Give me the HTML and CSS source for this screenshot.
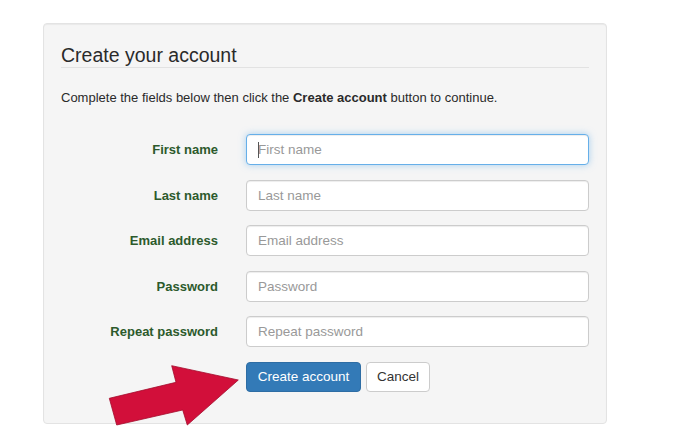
FILE: index.html
```html
<!DOCTYPE html>
<html lang="en">
<head>
<meta charset="utf-8">
<title>Create your account</title>
<link rel="stylesheet" href="styles.css">
</head>
<body>
<div class="panel">
  <h1 class="title">Create your account</h1>
  <p class="intro">Complete the fields below then click the <strong>Create account</strong> button to continue.</p>
  <form class="form">
    <label class="label" for="fn">First name</label>
    <span class="field focused"><input class="input" id="fn" type="text" placeholder="First name"></span>
    <label class="label" for="ln">Last name</label>
    <span class="field"><input class="input" id="ln" type="text" placeholder="Last name"></span>
    <label class="label" for="em">Email address</label>
    <span class="field"><input class="input" id="em" type="text" placeholder="Email address"></span>
    <label class="label" for="pw">Password</label>
    <span class="field"><input class="input" id="pw" type="password" placeholder="Password"></span>
    <label class="label" for="pw2">Repeat password</label>
    <span class="field"><input class="input" id="pw2" type="password" placeholder="Repeat password"></span>
    <div class="actions">
      <button type="button" class="btn btn-primary">Create account</button>
      <button type="button" class="btn btn-default">Cancel</button>
    </div>
  </form>
</div>
<svg class="arrow" width="673" height="435" viewBox="0 0 673 435">
  <polygon points="109.3,398.3 176,382.3 171.7,365.7 238.3,380 187.3,425 182.7,410 116.7,425" fill="#d20f3a" stroke="#a30b2c" stroke-width="0.8" stroke-linejoin="miter"/>
</svg>
</body>
</html>
```

FILE: styles.css
```css
html, body {
  margin: 0;
  padding: 0;
  background: #ffffff;
}
body {
  font-family: "Liberation Sans", Arial, Helvetica, sans-serif;
  color: #333333;
  width: 673px;
  height: 435px;
  overflow: hidden;
  position: relative;
}
.panel {
  margin: 23px 0 0 43px;
  width: 564px;
  height: 401px;
  box-sizing: border-box;
  background: #f5f5f5;
  border: 1px solid #e3e3e3;
  border-radius: 4px;
  box-shadow: inset 0 1px 1px rgba(0,0,0,0.05);
  padding: 0 17px;
}
.title {
  margin: 20px 0 0;
  font-size: 19.5px;
  line-height: 22px;
  font-weight: normal;
  color: #2a2a2a;
  padding-bottom: 1px;
  border-bottom: 1px solid #e2e2e2;
}
.intro {
  margin: 20px 0 0;
  font-size: 13px;
  line-height: 19px;
  color: #2a2a2a;
}
.intro strong {
  font-weight: bold;
}
.form {
  margin-top: 27px;
  display: grid;
  grid-template-columns: 157px 343px;
  column-gap: 28px;
  row-gap: 14.5px;
  grid-auto-rows: 31px;
}
.label {
  display: flex;
  align-items: center;
  justify-content: flex-end;
  font-weight: bold;
  font-size: 13px;
  color: #2c5a2c;
}
.field {
  position: relative;
  display: block;
}
.input {
  display: block;
  width: 100%;
  height: 31px;
  box-sizing: border-box;
  border: 1px solid #cccccc;
  border-radius: 4px;
  background: #ffffff;
  padding: 0 11px;
  font-family: inherit;
  font-size: 13.5px;
  color: #555;
  box-shadow: inset 0 1px 1px rgba(0,0,0,0.075);
  outline: none;
}
.input::placeholder {
  color: #999999;
}
.focused .input {
  border-color: #66afe9;
  box-shadow: inset 0 1px 1px rgba(0,0,0,0.075), 0 0 7px rgba(102,175,233,0.55);
}
.focused::after {
  content: "";
  position: absolute;
  left: 12px;
  top: 8px;
  width: 1px;
  height: 16px;
  background: #555;
}
.actions {
  grid-column: 2;
  display: flex;
  gap: 5px;
  align-items: flex-start;
}
.btn {
  height: 30px;
  box-sizing: border-box;
  border-radius: 4px;
  font-family: inherit;
  font-size: 13.5px;
  padding: 0;
  white-space: nowrap;
  cursor: pointer;
}
.btn-primary {
  background: #337ab7;
  border: 1px solid #2e6da4;
  color: #ffffff;
  width: 115px;
}
.btn-default {
  background: #ffffff;
  border: 1px solid #cccccc;
  color: #333;
  width: 64px;
}
.arrow {
  position: absolute;
  top: 0;
  left: 0;
  pointer-events: none;
}
```
